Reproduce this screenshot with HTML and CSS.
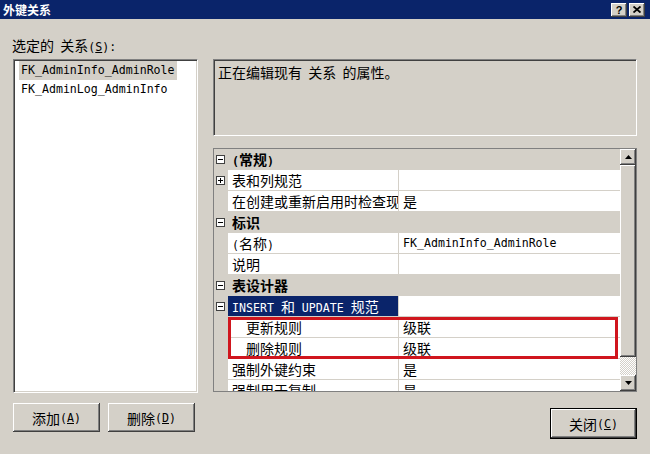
FILE: index.html
```html
<!DOCTYPE html>
<html lang="zh-CN">
<head>
<meta charset="utf-8">
<title>外键关系</title>
<link rel="stylesheet" href="styles.css">
</head>
<body>
<div class="titlebar">
  <span class="title">外键关系</span>
  <div class="tb-btns">
    <span class="tb-btn q">?</span>
    <span class="tb-btn"><svg width="8" height="7" viewBox="0 0 8 7"><path d="M0.5 0.5 L7.5 6.5 M7.5 0.5 L0.5 6.5" stroke="#000" stroke-width="1.8" fill="none"/></svg></span>
  </div>
</div>
<div class="body">
  <div class="left">
    <div class="label">选定的&nbsp; 关系<span class="m">(<u>S</u>):</span></div>
    <div class="listbox">
      <div class="item sel m">FK_AdminInfo_AdminRole</div>
      <div class="item m">FK_AdminLog_AdminInfo</div>
    </div>
    <div class="btnrow">
      <button class="btn">添加<span class="m">(<u>A</u>)</span></button>
      <button class="btn">删除<span class="m">(<u>D</u>)</span></button>
    </div>
  </div>
  <div class="right">
    <div class="desc">正在编辑现有&nbsp; 关系&nbsp; 的属性。</div>
    <div class="grid">
      <div class="rows">
        <div class="row cat"><div class="gutter"><span class="exp"></span></div><div class="catname"><span class="m b">(</span>常规<span class="m b">)</span></div></div>
        <div class="row"><div class="gutter"><span class="exp plus"></span></div><div class="name">表和列规范</div><div class="value"></div></div>
        <div class="row"><div class="gutter"></div><div class="name">在创建或重新启用时检查现</div><div class="value">是</div></div>
        <div class="row cat"><div class="gutter"><span class="exp"></span></div><div class="catname">标识</div></div>
        <div class="row"><div class="gutter"></div><div class="name"><span class="m">(</span>名称<span class="m">)</span></div><div class="value m">FK_AdminInfo_AdminRole</div></div>
        <div class="row"><div class="gutter"></div><div class="name">说明</div><div class="value"></div></div>
        <div class="row cat"><div class="gutter"><span class="exp"></span></div><div class="catname">表设计器</div></div>
        <div class="row"><div class="gutter"><span class="exp"></span></div><div class="name selname"><span class="m">INSERT </span>和<span class="m"> UPDATE </span>规范</div><div class="value"></div></div>
        <div class="row"><div class="gutter"></div><div class="name sub">更新规则</div><div class="value">级联</div></div>
        <div class="row"><div class="gutter"></div><div class="name sub">删除规则</div><div class="value">级联</div></div>
        <div class="row"><div class="gutter"></div><div class="name">强制外键约束</div><div class="value">是</div></div>
        <div class="row"><div class="gutter"></div><div class="name">强制用于复制</div><div class="value">是</div></div>
      </div>
      <div class="vscroll">
        <div class="sb-btn"><svg width="7" height="4" viewBox="0 0 7 4"><path d="M3.5 0 L7 4 L0 4 Z" fill="#000"/></svg></div>
        <div class="thumb"></div>
        <div class="track"></div>
        <div class="sb-btn"><svg width="7" height="4" viewBox="0 0 7 4"><path d="M0 0 L7 0 L3.5 4 Z" fill="#000"/></svg></div>
      </div>
      <div class="redbox"></div>
    </div>
    <div class="closerow">
      <button class="btn default">关闭<span class="m">(<u>C</u>)</span></button>
    </div>
  </div>
</div>
</body>
</html>
```

FILE: styles.css
```css
* { box-sizing: border-box; }
html, body { margin: 0; padding: 0; }
body {
  width: 650px;
  height: 454px;
  overflow: hidden;
  background: #d4d0c8;
  color: #000;
  font-family: "Noto Sans CJK SC", sans-serif;
  font-size: 14px;
  line-height: 20px;
}
.m { font-family: "DejaVu Sans Mono", "Noto Sans CJK SC", monospace; font-size: 11.6px; }
.b { font-weight: bold; }

.titlebar {
  height: 19px;
  background: #0a246a;
  display: flex;
  align-items: center;
  justify-content: space-between;
  padding: 0 5px 0 3px;
}
.title { color: #fff; font-weight: bold; font-size: 12px; line-height: 19px; }
.tb-btns { display: flex; gap: 2px; }
.tb-btn {
  width: 16px;
  height: 14px;
  background: #d4d0c8;
  box-shadow: inset -1px -1px #404040, inset 1px 1px #fff, inset -2px -2px #808080;
  display: flex;
  align-items: center;
  justify-content: center;
}
.tb-btn.q { font-family: "Liberation Sans", sans-serif; font-weight: bold; font-size: 11px; line-height: 14px; }

.body { display: flex; gap: 15px; padding: 16px 0 0 13px; }

.left { width: 185px; display: flex; flex-direction: column; }
.label { height: 24px; line-height: 20px; margin-left: -1px; }
.listbox {
  height: 334px;
  background: #fff;
  border: 1px solid;
  border-color: #808080 #fff #fff #808080;
  box-shadow: inset 1px 1px #404040, inset -1px -1px #d4d0c8;
  padding: 1px 0 0 5px;
}
.item { width: fit-content; padding: 0 2px; line-height: 19px; }
.item.sel { background: #d4d0c8; }

.btnrow { display: flex; gap: 8px; margin-top: 10px; }
.btn {
  width: 87px;
  height: 29px;
  border: none;
  padding: 0;
  background: #d4d0c8;
  font: inherit;
  color: #000;
  display: flex;
  align-items: center;
  justify-content: center;
  box-shadow: inset -1px -1px #404040, inset 1px 1px #fff, inset -2px -2px #808080;
}
.btn.default {
  height: 31px;
  box-shadow: inset 0 0 0 1px #000, inset -2px -2px #404040, inset 2px 2px #fff, inset -3px -3px #808080;
}

.right { width: 424px; padding-top: 24px; display: flex; flex-direction: column; }
.desc {
  height: 77px;
  border: 1px solid;
  border-color: #808080 #fff #fff #808080;
  box-shadow: inset 1px 1px #404040, inset -1px -1px #d4d0c8;
  padding: 2px 4px;
}

.grid {
  position: relative;
  margin-top: 12px;
  height: 244px;
  border: 1px solid #808080;
  display: flex;
  background: #d4d0c8;
}
.rows { flex: 1; overflow: hidden; }
.row { display: flex; height: 21px; }
.gutter { width: 14px; flex: none; display: flex; align-items: center; justify-content: center; padding-right: 1px; }
.name {
  width: 171px;
  flex: none;
  background: #fff;
  border-right: 1px solid #d4d0c8;
  border-bottom: 1px solid #d4d0c8;
  padding-left: 4px;
  white-space: nowrap;
  overflow: hidden;
}
.name.sub { padding-left: 18px; }
.name.selname { background: #0a246a; color: #fff; }
.value {
  flex: 1;
  background: #fff;
  border-bottom: 1px solid #d4d0c8;
  padding-left: 4px;
  white-space: nowrap;
  overflow: hidden;
}
.catname { flex: 1; padding-left: 4px; font-weight: bold; }

.exp {
  position: relative;
  width: 9px;
  height: 9px;
  border: 1px solid #404040;
  background: #fff;
}
.exp::before {
  content: "";
  position: absolute;
  left: 1px; right: 1px; top: 3px;
  height: 1px;
  background: #000;
}
.exp.plus::after {
  content: "";
  position: absolute;
  top: 1px; bottom: 1px; left: 3px;
  width: 1px;
  background: #000;
}

.vscroll { width: 16px; flex: none; display: flex; flex-direction: column; }
.sb-btn, .thumb {
  background: #d4d0c8;
  box-shadow: inset -1px -1px #404040, inset 1px 1px #fff, inset -2px -2px #808080;
}
.sb-btn { height: 16px; display: flex; align-items: center; justify-content: center; }
.thumb { height: 192px; }
.track { flex: 1; background: repeating-conic-gradient(#fff 0 25%, #d4d0c8 0 50%) 0 0 / 2px 2px; }

.redbox {
  position: absolute;
  left: 14px;
  top: 168px;
  width: 390px;
  height: 42px;
  border: 3px solid #d0161e;
}

.closerow { display: flex; justify-content: flex-end; margin-top: 16px; }
```
